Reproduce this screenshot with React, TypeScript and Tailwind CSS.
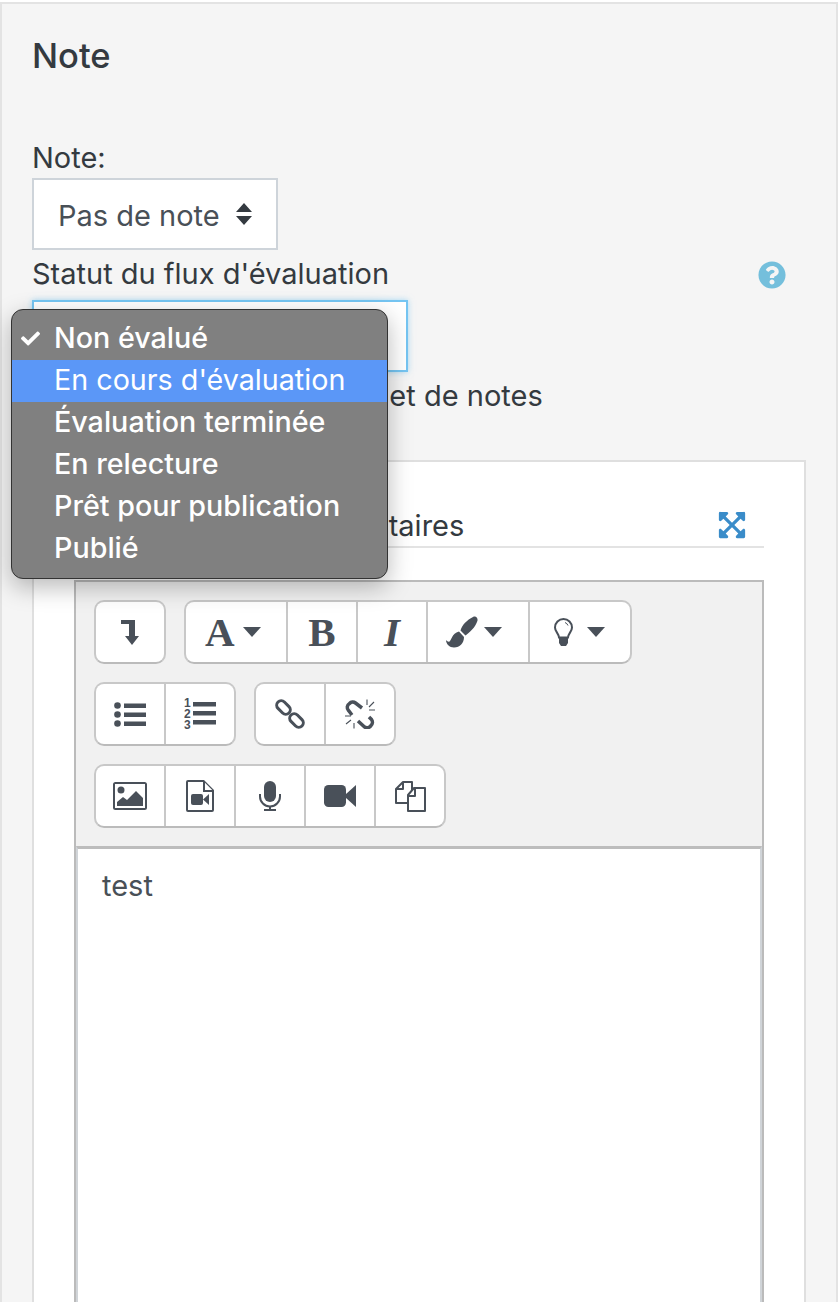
import { FaCheck, FaExpandArrowsAlt, FaQuestionCircle } from "react-icons/fa";

const font = "font-['Inter','Liberation_Sans',sans-serif]";

function Cell({ w = "w-[70px]", start = false, children }: { w?: string; start?: boolean; children: React.ReactNode }) {
  return (
    <div className={`flex h-full ${w} shrink-0 items-center ${start ? "justify-start" : "justify-center"} border-l-2 border-[#c8c8c8] first:border-l-0`}>
      {children}
    </div>
  );
}

function Group({ children }: { children: React.ReactNode }) {
  return (
    <div className="flex h-[64px] items-center rounded-[10px] border-2 border-[#c8c8c8] border-b-[#bbbbbb] bg-white text-[#495059]">
      {children}
    </div>
  );
}

function Caret({ ml }: { ml: string }) {
  return <span className={`${ml} h-0 w-0 border-x-[9px] border-t-[10px] border-x-transparent border-t-[#495059]`} />;
}

function LevelDown() {
  return (
    <svg width="18" height="25" viewBox="0 0 18 25" fill="#495059">
      <path d="M0 0h14v16h4l-7 9-7-9h4V4H0z" />
    </svg>
  );
}

function ListUl() {
  return (
    <svg width="32" height="25" viewBox="0 0 32 25" fill="#495059">
      <circle cx="3.500" cy="3.500" r="3.300" />
      <circle cx="3.500" cy="12.500" r="3.300" />
      <circle cx="3.500" cy="21.500" r="3.300" />
      <rect x="10" y="1.500" width="22" height="4.500" />
      <rect x="10" y="10.500" width="22" height="4.500" />
      <rect x="10" y="19.500" width="22" height="4.500" />
    </svg>
  );
}

function ListOl() {
  return (
    <svg width="32" height="34" viewBox="0 0 32 34" fill="#495059">
      <text x="0" y="10" fontSize="12" fontWeight="700" fontFamily="Liberation Sans">1</text>
      <text x="0" y="21" fontSize="12" fontWeight="700" fontFamily="Liberation Sans">2</text>
      <text x="0" y="32" fontSize="12" fontWeight="700" fontFamily="Liberation Sans">3</text>
      <rect x="9" y="5" width="23" height="4.500" />
      <rect x="9" y="14" width="23" height="4.500" />
      <rect x="9" y="23" width="23" height="4.500" />
    </svg>
  );
}

function LinkIcon() {
  return (
    <svg width="30" height="30" viewBox="0 0 30 30" fill="none" stroke="#495059" strokeWidth="3">
      <rect x="-7.750" y="-4.500" width="15.500" height="9" rx="4.500" transform="translate(8.500 8.500) rotate(45)" />
      <rect x="-7.750" y="-4.500" width="15.500" height="9" rx="4.500" transform="translate(21.500 21.500) rotate(45)" />
    </svg>
  );
}

function UnlinkIcon() {
  return (
    <svg width="30" height="30" viewBox="0 0 30 30" fill="none" stroke="#495059">
      <path d="M7 16 3.500 11.500a4.500 4.500 0 0 1 1-7 4.500 4.500 0 0 1 6-.5L17 9" strokeWidth="3.500" />
      <path d="M13 22l6 5.500a4.500 4.500 0 0 0 7-1 4.500 4.500 0 0 0 .5-6L24 18" strokeWidth="3.500" />
      <path d="M0 17h6M1 25l5-4M9 29.500V24M22 .5V6M29 3l-5 5M30 11h-6" strokeWidth="1.100" />
    </svg>
  );
}

function Brush() {
  return (
    <svg width="32" height="32" viewBox="0 0 32 32" fill="#495059">
      <path d="M27 1c2.500-1.500 5 .5 4.500 3.500-1 4-5 10-12 15l-5-5C16 9 21 4 27 1z" />
      <path d="M13 15.500 18 21c0 6-4 10.500-10 10.500C3.500 31.500 0 28 0 24c1.200 1.500 2.500 2 3.500 1.500 2-1 2-8 9.500-10z" />
    </svg>
  );
}

function ImageIcon() {
  return (
    <svg width="34" height="28" viewBox="0 0 34 28" fill="#495059">
      <path fillRule="evenodd" d="M2.500 0h29A2.500 2.500 0 0 1 34 2.500v23a2.500 2.500 0 0 1-2.500 2.500h-29A2.500 2.500 0 0 1 0 25.500v-23A2.500 2.500 0 0 1 2.500 0zM2 2v24h30V2z" />
      <circle cx="8" cy="8" r="3.500" />
      <path d="M4 24v-4l6-5 4 3 9-9 7 7v8z" />
    </svg>
  );
}

function FileVideo() {
  return (
    <svg width="28" height="32" viewBox="0 0 28 32" fill="#495059">
      <path fillRule="evenodd" d="M2 0h16l10 10v20a2 2 0 0 1-2 2H2a2 2 0 0 1-2-2V2a2 2 0 0 1 2-2zm0 2v28h24V12h-9V2zm17 .8V10h7.200z" />
      <rect x="5" y="14" width="12" height="11" rx="2" />
      <path d="M17 19.500l6-5.500v11z" />
    </svg>
  );
}

function Mic() {
  return (
    <svg width="22" height="30" viewBox="0 0 22 30" fill="#495059">
      <rect x="5" y="0" width="12" height="21" rx="6" />
      <path d="M1 13v2.500a10 10 0 0 0 20 0V13" fill="none" stroke="#495059" strokeWidth="2" />
      <rect x="10" y="25" width="2" height="3" />
      <rect x="5" y="28" width="12" height="2" />
    </svg>
  );
}

function VideoIcon() {
  return (
    <svg width="32" height="24" viewBox="0 0 32 24" fill="#495059">
      <rect x="0" y="1" width="22" height="22" rx="4.500" />
      <path d="M22 10l10-9v22l-10-9z" />
    </svg>
  );
}

function Copy() {
  return (
    <svg width="32" height="32" viewBox="0 0 32 32" fill="none" stroke="#495059" strokeWidth="2" strokeLinejoin="round">
      <path d="M14 23H2V9l7-7h9v8" />
      <path d="M2 9h7V2" />
      <path d="M14 31h17V8h-11l-6 7z" fill="white" />
      <path d="M14 16h7V8" />
    </svg>
  );
}

function Bulb() {
  return (
    <svg width="19" height="28" viewBox="0 0 19 28" fill="#495059">
      <path d="M9.500 1a8.500 8.500 0 0 0-8.500 8.500c0 4 3.500 5.500 4 10h9c.5-4.500 4-6 4-10A8.500 8.500 0 0 0 9.500 1z" fill="none" stroke="#495059" strokeWidth="2" />
      <path d="M11 4.500a5 5 0 0 1 3 3" fill="none" stroke="#495059" strokeWidth="1" />
      <path d="M5 19.500h9V25l-2 3H7l-2-3z" />
    </svg>
  );
}

const options = ["Non évalué", "En cours d'évaluation", "Évaluation terminée", "En relecture", "Prêt pour publication", "Publié"];

export default function App() {
  return (
    <div className={`relative h-[1302px] w-[838px] overflow-hidden bg-white pt-[2px] ${font} text-[29px] text-[#343a40]`}>
      <div className="h-[1400px] border-2 border-[#e3e3e3] bg-[#f5f5f5] pl-[30px] pr-[30px]">
        <h3 className="mt-[32px] text-[34.500px] font-medium leading-[40px]">Note</h3>

        <div className="mt-[62px] leading-[40px]">Note:</div>
        <div className="flex h-[72px] w-[246px] items-center border-2 border-[#ced4da] bg-white pl-[24px] pt-[4px] text-[#495057]">
          Pas de note
          <svg className="-mt-[4px] ml-[16px]" width="16" height="22" viewBox="0 0 16 22" fill="#343a40">
            <path d="M8 0l8 9H0zM0 13h16l-8 9z" />
          </svg>
        </div>

        <div className="flex h-[50px] items-center justify-between pb-[2px] pr-[20px]">
          <span>Statut du flux d'évaluation</span>
          <FaQuestionCircle className="mt-[2px] text-[#74bfdc]" size={28} />
        </div>
        <div className="h-[72px] w-[376px] border-2 border-[#75c5f2] bg-white shadow-[0_0_6px_rgba(117,197,242,0.6)]" />

        <div className="mt-[4px] flex h-[40px] items-center">Note actuelle dans le carnet de notes</div>

        <div className="mt-[44px] h-[900px] w-[774px] border-2 border-[#dfdfdf] bg-white pl-[40px] pr-[40px]">
          <div className="flex h-[86px] items-end justify-between border-b-2 border-[#e3e3e3]">
            <span className="leading-[40px]">Feedback par commentaires</span>
            <FaExpandArrowsAlt className="mb-[6px] mr-[17px] text-[#3a8cc9]" size={30} />
          </div>

          <div className="mt-[32px] border-2 border-b-0 border-[#bbbbbb] bg-[#f1f1f1]">
            <div className="flex flex-col gap-[18px] p-[18px]">
              <div className="flex gap-[18px]">
                <Group>
                  <Cell w="w-[68px]"><LevelDown /></Cell>
                </Group>
                <Group>
                  <Cell w="w-[100px] pl-[19px]" start>
                    <span className="font-['Liberation_Serif',serif] text-[41px] font-bold leading-none">A</span>
                    <Caret ml="ml-[8px]" />
                  </Cell>
                  <Cell>
                    <span className="font-['Liberation_Serif',serif] text-[41px] font-bold leading-none">B</span>
                  </Cell>
                  <Cell>
                    <span className="font-['Liberation_Serif',serif] text-[41px] font-bold italic leading-none">I</span>
                  </Cell>
                  <Cell w="w-[102px] pl-[18px]" start>
                    <Brush />
                    <Caret ml="ml-[6px]" />
                  </Cell>
                  <Cell w="w-[102px] pl-[24px]" start>
                    <Bulb />
                    <Caret ml="ml-[14px]" />
                  </Cell>
                </Group>
              </div>
              <div className="flex gap-[18px]">
                <Group>
                  <Cell w="w-[68px]"><ListUl /></Cell>
                  <Cell><ListOl /></Cell>
                </Group>
                <Group>
                  <Cell w="w-[68px]"><LinkIcon /></Cell>
                  <Cell><UnlinkIcon /></Cell>
                </Group>
              </div>
              <div className="flex gap-[18px]">
                <Group>
                  <Cell w="w-[68px]"><ImageIcon /></Cell>
                  <Cell><FileVideo /></Cell>
                  <Cell><Mic /></Cell>
                  <Cell><VideoIcon /></Cell>
                  <Cell><Copy /></Cell>
                </Group>
              </div>
            </div>
            <div className="h-[600px] border-2 border-t-[3px] border-[#d0d4d8] border-t-[#bdbdbd] bg-white px-[24px] pt-[17px] leading-[40px] text-[#495057]">
              test
            </div>
          </div>
        </div>
      </div>

      <div className="absolute left-[11px] top-[309px] h-[270px] w-[377px] rounded-[12px] border border-[#333333] bg-[#808080] pt-[8px] text-[28.700px] font-medium text-white shadow-[0_8px_24px_rgba(0,0,0,0.28)]">
        {options.map((o, i) => (
          <div key={o} className={`relative flex h-[42px] items-center pb-[2px] pl-[42px] ${i === 1 ? "bg-[#5b97f7] font-normal" : ""}`}>
            {i === 0 && <FaCheck className="absolute left-[9px]" size={19} />}
            {o}
          </div>
        ))}
      </div>
    </div>
  );
}
